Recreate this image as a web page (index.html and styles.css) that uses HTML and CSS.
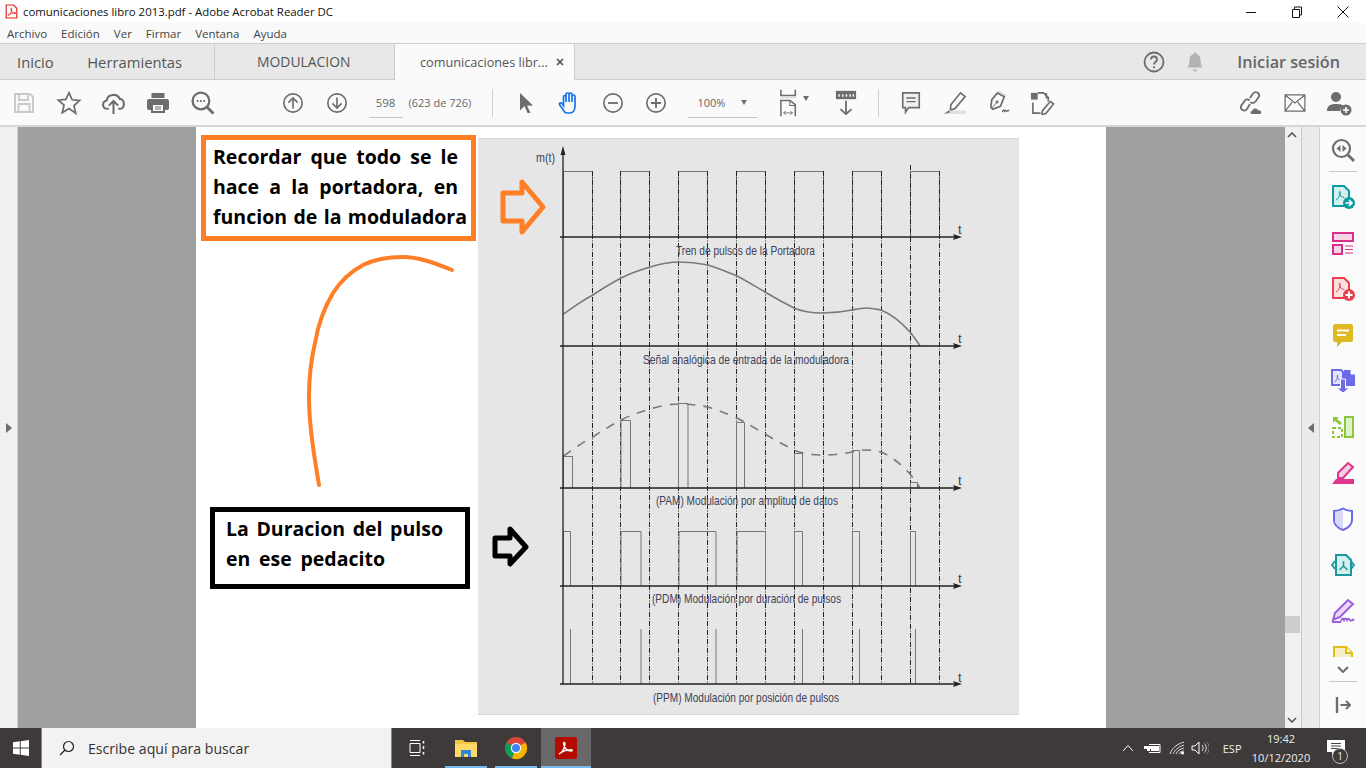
FILE: index.html
```html
<!DOCTYPE html>
<html lang="es">
<head>
<meta charset="utf-8">
<title>comunicaciones libro 2013.pdf - Adobe Acrobat Reader DC</title>
<link rel="stylesheet" href="styles.css">
</head>
<body>
<div class="app">
  <header class="titlebar">
    <svg class="title-icon" viewBox="0 0 16 18"><path d="M1.5 1h9l4 4v12h-13z" fill="#fff" stroke="#e0201b" stroke-width="1.4"/><path d="M3.5 14c3-1.500 4.500-4.500 4.800-8 .1-1.600-1.300-1.600-1 0 .6 3.300 2.800 5.500 5.700 5.500 1.300 0 1-1.200-.4-1.100-3.300.2-6.300 1.400-9.100 3.600z" fill="none" stroke="#e0201b" stroke-width="1"/></svg>
    <span class="title-text">comunicaciones libro 2013.pdf - Adobe Acrobat Reader DC</span>
    <div class="win-controls">
      <span class="win-btn"><svg viewBox="0 0 12 12" width="12" height="12"><path d="M1 6.500h10" stroke="#111" stroke-width="1"/></svg></span>
      <span class="win-btn"><svg viewBox="0 0 12 12" width="12" height="12"><path d="M1.500 3.500h7v8h-7zM3.500 3.500v-2.500h7v8h-2" fill="none" stroke="#111" stroke-width="1"/></svg></span>
      <span class="win-btn"><svg viewBox="0 0 12 12" width="12" height="12"><path d="M.5.500l11 11M11.500.500l-11 11" stroke="#111" stroke-width="1"/></svg></span>
    </div>
  </header>

  <nav class="menubar">
    <span class="menu-item">Archivo</span><span class="menu-item">Edición</span><span class="menu-item">Ver</span><span class="menu-item">Firmar</span><span class="menu-item">Ventana</span><span class="menu-item">Ayuda</span>
  </nav>

  <div class="tabbar">
    <div class="tab-home"><span class="tab-link">Inicio</span><span class="tab-link">Herramientas</span></div>
    <div class="tab-doc">MODULACION</div>
    <div class="tab-active"><span>comunicaciones libr...</span><svg viewBox="0 0 8 8" width="8" height="8"><path d="M1 1l6 6M7 1l-6 6" stroke="#555" stroke-width="1.700"/></svg></div>
    <div class="tab-right">
      <svg viewBox="0 0 24 24" width="24" height="24"><circle cx="12" cy="12" r="9.500" fill="none" stroke="#6d6d6d" stroke-width="1.800"/><path d="M9 9.500c0-4 6-4 6 0 0 2.500-3 2.500-3 5" fill="none" stroke="#6d6d6d" stroke-width="1.800"/><circle cx="12" cy="17.300" r="1.100" fill="#6d6d6d"/></svg>
      <svg class="bell" viewBox="0 0 24 24" width="24" height="24"><path d="M12 2.500c1 0 1.500.7 1.500 1.500 3 1 4 3.500 4 6.500 0 3.500 1 5.500 2 7H4.500c1-1.500 2-3.500 2-7 0-3 1-5.500 4-6.500 0-.8.500-1.500 1.500-1.500z" fill="#b2b2b2"/><path d="M10 19.500h4c0 2.500-4 2.500-4 0z" fill="#b2b2b2"/></svg>
      <span class="signin">Iniciar sesión</span>
    </div>
  </div>

  <div class="toolbar">
    <div class="tb-group tb-file">
      <span class="tb-cell"><svg viewBox="0 0 24 24" width="24" height="24"><path d="M3 3h15l3 3v15H3z" fill="none" stroke="#c9c9c9" stroke-width="2"/><path d="M7 3h9v6H7zM6.500 13h11v8h-11z" fill="none" stroke="#c9c9c9" stroke-width="1.800"/></svg></span>
      <span class="tb-cell"><svg viewBox="0 0 24 24" width="26" height="26"><path d="M12 2.500l2.900 6.500 7 .7-5.300 4.700 1.600 7L12 17.200 5.800 21l1.600-7-5.300-4.700 7-.7z" fill="none" stroke="#6d6d6d" stroke-width="1.600"/></svg></span>
      <span class="tb-cell"><svg viewBox="0 0 24 24" width="25" height="25"><path d="M7.500 18H6c-5 0-5.500-7-.5-8 .5-6 10-7.500 12.500-1.500 5 0 5.500 9.500.5 9.500h-2" fill="none" stroke="#6d6d6d" stroke-width="2"/><path d="M12 23V11M7.500 15l4.500-4.500 4.500 4.500" fill="none" stroke="#6d6d6d" stroke-width="2"/></svg></span>
      <span class="tb-cell"><svg viewBox="0 0 24 24" width="24" height="24"><path d="M5.500 2h13v5h-13z" fill="#6d6d6d"/><path d="M3 8h18c1 0 2 1 2 2v7c0 1-1 2-2 2h-2v3H5v-3H3c-1 0-2-1-2-2v-7c0-1 1-2 2-2z" fill="#6d6d6d"/><path d="M7 14h10v6H7z" fill="#fafafa"/><path d="M9 16h6M9 18h6" stroke="#6d6d6d"/></svg></span>
      <span class="tb-cell"><svg viewBox="0 0 24 24" width="25" height="25"><circle cx="10.500" cy="10.500" r="8" fill="none" stroke="#6d6d6d" stroke-width="2.200"/><path d="M16.500 16.500l6 6" stroke="#6d6d6d" stroke-width="2.800"/><path d="M6.500 10.500h1.600M9.700 10.500h1.600M12.900 10.500h1.600" stroke="#6d6d6d" stroke-width="1.800"/></svg></span>
    </div>
    <div class="tb-group tb-nav">
      <span class="tb-cell"><svg viewBox="0 0 24 24" width="22" height="22"><circle cx="12" cy="12" r="10" fill="none" stroke="#6d6d6d" stroke-width="1.800"/><path d="M12 18V6.500M7 11.500l5-5 5 5" fill="none" stroke="#6d6d6d" stroke-width="1.800"/></svg></span>
      <span class="tb-cell"><svg viewBox="0 0 24 24" width="22" height="22"><circle cx="12" cy="12" r="10" fill="none" stroke="#6d6d6d" stroke-width="1.800"/><path d="M12 6v11.500M7 12.500l5 5 5-5" fill="none" stroke="#6d6d6d" stroke-width="1.800"/></svg></span>
    </div>
    <span class="field field-page">598</span>
    <span class="page-count">(623 de 726)</span>
    <span class="tb-sep sep-a"></span>
    <div class="tb-group tb-mode">
      <span class="tb-cell"><svg viewBox="0 0 24 24" width="24" height="24"><path d="M6 2l13 12.500-6 .3 3.500 7-3 .2-3-7-4.500 4.500z" fill="#6d6d6d"/></svg></span>
      <span class="tb-cell"><svg viewBox="0 0 24 24" width="24" height="24"><path d="M6 20c-2-3-5-6-4.500-7.500s2.500-.5 4 2V6c0-2 2.500-2 2.500 0v5V3.500c0-2 3-2 3 0V11V3.500c0-2 3-2 3 0V11V5.500c0-2 3-2 3 0V15c0 4-2 7-5 7h-3c-1.500 0-2.500-.5-3-2z" fill="none" stroke="#1473e6" stroke-width="1.700"/></svg></span>
    </div>
    <div class="tb-group tb-zoom">
      <span class="tb-cell"><svg viewBox="0 0 24 24" width="22" height="22"><circle cx="12" cy="12" r="10" fill="none" stroke="#6d6d6d" stroke-width="1.800"/><path d="M6.500 12h11" stroke="#6d6d6d" stroke-width="2"/></svg></span>
      <span class="tb-cell"><svg viewBox="0 0 24 24" width="22" height="22"><circle cx="12" cy="12" r="10" fill="none" stroke="#6d6d6d" stroke-width="1.800"/><path d="M6.500 12h11M12 6.500v11" stroke="#6d6d6d" stroke-width="2"/></svg></span>
    </div>
    <span class="field field-zoom"><span>100%</span><i class="caret"></i></span>
    <span class="tb-fit"><svg viewBox="0 0 20 34" width="18" height="28" preserveAspectRatio="none"><path d="M1 1v7h16V1" fill="none" stroke="#6d6d6d" stroke-width="1.800"/><path d="M1 10h17" stroke="#dcdcdc" stroke-width="2.500"/><path d="M1 33V14h10l6 5v14" fill="none" stroke="#6d6d6d" stroke-width="1.700"/><path d="M11 14v6h6" fill="none" stroke="#6d6d6d" stroke-width="1.200"/><path d="M4 29h10M4 29l2.500-2M4 29l2.500 2M14 29l-2.500-2M14 29l-2.500 2" stroke="#6d6d6d" fill="none"/></svg><i class="caret"></i></span>
    <span class="tb-cell tb-scroll"><svg viewBox="0 0 24 30" width="22" height="25" preserveAspectRatio="none"><path d="M1 1h22v10H1z" fill="#6d6d6d"/><path d="M4.500 5v3M8.500 5v3M12.500 5v3M16.500 5v3M20 5v3" stroke="#fff" stroke-width="1.500"/><path d="M12 13v16M6 23l6 6 6-6" fill="none" stroke="#6d6d6d" stroke-width="2"/></svg></span>
    <span class="tb-sep sep-b"></span>
    <div class="tb-group tb-annot">
      <span class="tb-cell"><svg viewBox="0 0 24 26" width="22" height="24"><path d="M3 2h18v16H9.500L6 23v-5H3z" fill="#f0f0f0" stroke="#6d6d6d" stroke-width="1.800"/><path d="M7 7.500h10M7 11.500h10" stroke="#6d6d6d" stroke-width="1.500"/></svg></span>
      <span class="tb-cell"><svg viewBox="0 0 26 26" width="24" height="24"><path d="M19 2l5 4-11 13-5 2 .5-6z" fill="none" stroke="#6d6d6d" stroke-width="1.800"/><path d="M1 25l5-4h19v4z" fill="#e0e0e0"/><path d="M1 25l5-4 2 2z" fill="#6d6d6d"/></svg></span>
      <span class="tb-cell"><svg viewBox="0 0 26 26" width="25" height="25"><path d="M12 3l7 4-4 10-8 3-2-2 1-8z" fill="none" stroke="#6d6d6d" stroke-width="1.800"/><path d="M13 1l8 5" stroke="#dcdcdc" stroke-width="2"/><path d="M6 19l5-6" stroke="#6d6d6d"/><circle cx="11.500" cy="12.500" r="1.500" fill="#6d6d6d"/><path d="M17 23c1-3 1.500-3 2-1s1-2 1.500-1 .5 1.500 1.500 1 1-2 2 0" fill="none" stroke="#6d6d6d" stroke-width="1.300"/></svg></span>
      <span class="tb-cell"><svg viewBox="0 0 26 26" width="25" height="25"><path d="M1 3h7v7H1z" fill="#6d6d6d"/><path d="M8 3h6l5 5v4M17 3v5h3M3 13v11h8" fill="none" stroke="#6d6d6d" stroke-width="1.700"/><path d="M21 12l3.500 2.500-8 10-4 1 .5-4z" fill="none" stroke="#6d6d6d" stroke-width="1.700"/></svg></span>
    </div>
    <div class="tb-group tb-share">
      <span class="tb-cell"><svg viewBox="0 0 26 26" width="26" height="26"><path d="M12 8l3-4.500c2.500-3 7-.5 6 3l-3.500 5c-1.500 2-4 2-5 .5M12 14l-3 5c-2.500 3-7 1-6-3l3.500-5c1.500-2 4-2 5-.5" fill="none" stroke="#6d6d6d" stroke-width="1.800"/><path d="M14 24c-2 0-2-3 0-3 .5-3 5-3.500 6-.5 3-1 5 3.500 1.500 3.500z" fill="#6d6d6d"/></svg></span>
      <span class="tb-cell"><svg viewBox="0 0 24 20" width="22" height="18"><path d="M1 1h22v18H1zM1 1l11 9 11-9M1 19l8-10M23 19l-8-10" fill="none" stroke="#6d6d6d" stroke-width="1.400"/></svg></span>
      <span class="tb-cell"><svg viewBox="0 0 26 26" width="26" height="26"><circle cx="10" cy="7" r="5" fill="#6d6d6d"/><path d="M1 21c0-6 4-7 9-7s7 1 8 2c-3 1-4 3-4 5z" fill="#6d6d6d"/><circle cx="20" cy="20" r="5.500" fill="#6d6d6d"/><path d="M17 20h6M20 17v6" stroke="#fff" stroke-width="1.600"/></svg></span>
    </div>
  </div>

  <main class="workspace">
    <aside class="left-rail"><i class="tri-right"></i></aside>
    <section class="viewer">
      <article class="doc-page">
        <div class="note note-orange">
          <span class="note-line nl-245">Recordar que todo se le</span>
          <span class="note-line nl-245">hace a la portadora, en</span>
          <span class="note-line nl-254">funcion de la moduladora</span>
        </div>
        <div class="note note-black">
          <span class="note-line nl-217">La Duracion del pulso</span>
          <span class="note-line nl-159">en ese pedacito</span>
        </div>
        <svg class="canvas" viewBox="196 127 910 600" width="910" height="600" xmlns="http://www.w3.org/2000/svg">
          <rect x="478" y="138" width="541" height="577" fill="#e6e6e6"/>
          <path d="M478 138.500h541M478 714.500h541" stroke="#d6d6d6"/>
          <path class="thin" d="M563.500 237V171.500H592.500V237M620.500 237V171.500H649.500V237M678.500 237V171.500H707.500V237M736.500 237V171.500H765.500V237M794.500 237V171.500H823.500V237M852.500 237V171.500H881.500V237M910.500 237V171.500H939.500V237"/>
          <g class="grid-dash">
            <path d="M592.500 171V684M620.500 171V684M649.500 171V684M678.500 171V684M707.500 171V684M736.500 171V684M765.500 171V684M794.500 171V684M823.500 171V684M852.500 171V684M881.500 171V684M910.500 165V684M939.500 171V684"/>
          </g>
          <path id="wave" class="wave" d="M563.500 314C575 306 583 300 593 295C603 288 612 283 621 278C631 273 640 270 650 267C660 264 670 262 679 262C689 262 698 263 708 265C718 268 727 272 737 276C747 281 756 287 765 292C775 298 784 303 794 308C803 312 813 313 823 313C833 313 842 312 852 310C857 309 861 308 866.500 308C872 308 876 309 881 310C891 314 901 322 910 332C914 337 917 341 920 346"/>
          <path class="wave dashed" d="M563.500 456C575 448 583 442 593 437C603 430 612 425 621 420C631 415 640 412 650 409C660 406 670 404 679 404C689 404 698 405 708 407C718 410 727 414 737 418C747 423 756 429 765 434C775 440 784 445 794 450C803 454 813 455 823 455C833 455 842 454 852 452C857 451 861 450 866.500 450C872 450 876 451 881 452C891 456 901 464 910 474C914 479 917 483 920 488"/>
          <path class="thin" d="M563.500 488V456.500H572.500V488M621 488V420.500H630.500V488M678.500 488V403.500H688V488M736.500 488V422.500H744.500V488M794.500 488V453.500H802.500V488M852.500 488V450.500H859.500V488M910.500 488V482.500H917.500V488"/>
          <path class="thin" d="M563.500 586V531.500H570.500V586M621 586V531.500H641V586M679 586V531.500H716V586M737 586V531.500H765.500V586M794.500 586V531.500H802.500V586M852.500 586V531.500H859.500V586M910.500 586V531.500H915.500V586"/>
          <path class="thin" d="M570.500 629V684M641 629V684M716 629V684M802.500 629V684M859.500 629V684M915.500 629V684"/>
          <path class="axis" d="M563 684V150M560 237H958M560 346H958M560 488H958M560 586H958M560 684H958"/>
          <path class="arrowhead" d="M563 146l-2.500 9h5zM962 237l-9-3 1.500 3-1.500 3zM962 346l-9-3 1.500 3-1.500 3zM962 488l-9-3 1.500 3-1.500 3zM962 586l-9-3 1.500 3-1.500 3zM962 684l-9-3 1.500 3-1.500 3z"/>
          <g class="chart-text">
            <text x="536" y="162" textLength="19" lengthAdjust="spacingAndGlyphs">m(t)</text>
            <text x="958" y="234">t</text><text x="958" y="343">t</text><text x="958" y="485">t</text><text x="958" y="583">t</text><text x="958" y="682">t</text>
            <text x="676" y="255" textLength="139" lengthAdjust="spacingAndGlyphs">Tren de pulsos de la Portadora</text>
            <text x="643" y="364" textLength="206" lengthAdjust="spacingAndGlyphs">Señal analógica  de entrada de la moduladora</text>
            <text x="656" y="505" textLength="182" lengthAdjust="spacingAndGlyphs">(PAM) Modulación por amplitud de datos</text>
            <text x="652" y="603" textLength="189" lengthAdjust="spacingAndGlyphs">(PDM) Modulación por duración de pulsos</text>
            <text x="653" y="702" textLength="186" lengthAdjust="spacingAndGlyphs">(PPM) Modulación por posición de pulsos</text>
          </g>
          <path class="mark mark-orange" d="M503 193H522V182L543 207L522 232V221H503Z"/>
          <path class="mark mark-black" d="M495 538H510V529L526 547L510 564V556H495Z"/>
          <path class="stroke-orange" d="M452 270C432 262 418 257 403 257C388 257 375 259 363 265C350 272 340 282 333 293C324 308 318 325 315 343C311 360 309 378 309 397C309 425 314 455 319 485"/>
        </svg>
      </article>
    </section>
    <div class="scrollbar">
      <svg viewBox="0 0 10 6" width="10" height="6"><path d="M1 5l4-4 4 4" fill="none" stroke="#555" stroke-width="1.600"/></svg>
      <span class="scroll-thumb"></span>
      <svg viewBox="0 0 10 6" width="10" height="6"><path d="M1 1l4 4 4-4" fill="none" stroke="#555" stroke-width="1.600"/></svg>
    </div>
    <aside class="collapse-rail"><i class="tri-left"></i></aside>
    <aside class="tool-panel">
      <span class="tool-top"><svg viewBox="0 0 24 24" width="24" height="24"><circle cx="10.500" cy="10.500" r="8.500" fill="none" stroke="#6d6d6d" stroke-width="2.200"/><path d="M17 17l6 6" stroke="#6d6d6d" stroke-width="2.800"/><path d="M9.500 7v7l-4-3.500zM11.500 7v7l4-3.500z" fill="#6d6d6d"/></svg></span>
      <span class="tool-rule"></span>
      <div class="tool-list">
        <span class="tool"><svg viewBox="0 0 24 24" width="24" height="24"><path d="M2 1h11l5 5v15H2z" fill="#d5eeee" stroke="#0f9a9e" stroke-width="2"/><path d="M5 15c2.500-1.500 4-4.500 4.300-7.500 0-1.500-1.200-1.500-1 0 .5 3 2.500 5 5 5" fill="none" stroke="#0f9a9e"/><circle cx="18" cy="18" r="6" fill="#0f9a9e"/><path d="M14.500 18h6M18 15l3 3-3 3" fill="none" stroke="#fff" stroke-width="1.600"/></svg></span>
        <span class="tool"><svg viewBox="0 0 24 24" width="24" height="24"><path d="M2 2h20v8H2z" fill="#f5d5e6" stroke="#d9308c" stroke-width="2"/><path d="M2 14h9v9H2z" fill="#f5d5e6" stroke="#d9308c" stroke-width="2"/><path d="M14 15h8M14 18.500h8M14 22h8" stroke="#d9308c" stroke-width="1.200"/></svg></span>
        <span class="tool"><svg viewBox="0 0 24 24" width="24" height="24"><path d="M2 1h11l5 5v15H2z" fill="#fbe0e2" stroke="#e8404f" stroke-width="2"/><path d="M5 15c2.500-1.500 4-4.500 4.300-7.500 0-1.500-1.200-1.500-1 0 .5 3 2.500 5 5 5" fill="none" stroke="#e8404f"/><circle cx="18" cy="18" r="6" fill="#e8404f"/><path d="M14.500 18h7M18 14.500v7" stroke="#fff" stroke-width="2"/></svg></span>
        <span class="tool"><svg viewBox="0 0 24 24" width="24" height="24"><path d="M4 1h16c1 0 2 1 2 2v14c0 1-1 2-2 2H11l-5 5v-5H4c-1 0-2-1-2-2V3c0-1 1-2 2-2z" fill="#e0b820"/><path d="M6 7.500h12M6 12h9" stroke="#fff" stroke-width="2"/></svg></span>
        <span class="tool"><svg viewBox="0 0 24 24" width="24" height="24"><path d="M1 1h9l2 2v13H1z" fill="#e4e4fb" stroke="#6b6be8" stroke-width="2"/><path d="M13 1h7l4 4v12H13z" fill="#6b6be8"/><path d="M20 0v5h4" fill="#fff" stroke="#fff"/><path d="M3.500 13c2-1 3-3.500 3.300-6 0-1-1-1-.8 0 .4 2.500 2 4 4 4" fill="none" stroke="#6b6be8"/><path d="M9.500 10v9h-4l6.500 5 6.500-5h-4v-9z" fill="#6b6be8" stroke="#fbfbfb"/></svg></span>
        <span class="tool"><svg viewBox="0 0 24 24" width="24" height="24"><path d="M14 2h8v20h-8z" fill="#dff1c9" stroke="#8cc63f" stroke-width="2"/><path d="M2 13h9v9H2z" fill="none" stroke="#8cc63f" stroke-width="2" stroke-dasharray="3 2"/><path d="M2 2h6l-2 2 5 4-2 2-5-4-2 2z" fill="#8cc63f"/></svg></span>
        <span class="tool"><svg viewBox="0 0 24 24" width="24" height="24"><path d="M17 2l5 4-10 11H7v-5z" fill="#f7d0e4" stroke="#e0358d" stroke-width="2"/><path d="M1 23l4-5h18v5z" fill="#e0358d"/></svg></span>
        <span class="tool"><svg viewBox="0 0 24 24" width="24" height="24"><path d="M12 1.500c3 2 6 2.500 9 2.500v9c0 5-4 8-9 10-5-2-9-5-9-10V4c3 0 6-.5 9-2.500z" fill="#fff" stroke="#6a6ae8" stroke-width="2"/><path d="M12 3v19c-4-2-8-4.500-8-9V5c3 0 5.500-.5 8-2z" fill="#d8d8f8"/></svg></span>
        <span class="tool"><svg viewBox="0 0 24 24" width="24" height="24"><path d="M5 2h10l5 5v15H5z" fill="#d5eeee" stroke="#1a9a9e" stroke-width="2"/><path d="M12.500 8v5M8.500 17l4-4 4 4" fill="none" stroke="#1a9a9e" stroke-width="1.500"/><path d="M4 8L1 12l3 4M20 8l3 4-3 4" fill="none" stroke="#1a9a9e" stroke-width="2" /></svg></span>
        <span class="tool"><svg viewBox="0 0 24 24" width="24" height="24"><path d="M17 1l5 4-13 13-7 3 2-7z" fill="#e8d8f8" stroke="#9b5fdc" stroke-width="2"/><path d="M1 23h9M10 22c1-3 2-3 3-1 1-2 2-2 3 0 1-2 2-1 3 0s3 0 4-1" fill="none" stroke="#9b5fdc" stroke-width="2"/></svg></span>
        <span class="tool"><svg viewBox="0 0 24 24" width="24" height="24"><path d="M3 2h12l6 6v15H3z" fill="#f5efc4" stroke="#e2bd10" stroke-width="2"/><path d="M15 2v6h6" fill="#fff" stroke="#e2bd10" stroke-width="2"/></svg></span>
      </div>
      <span class="tool-more"><svg viewBox="0 0 12 7" width="12" height="7"><path d="M1 1l5 5 5-5" fill="none" stroke="#6d6d6d" stroke-width="2"/></svg></span>
      <span class="tool-rule"></span>
      <span class="tool-exit"><svg viewBox="0 0 16 16" width="16" height="16"><path d="M2 0v16" stroke="#6d6d6d" stroke-width="2.400"/><path d="M5.500 8H15M11 4l4 4-4 4" fill="none" stroke="#6d6d6d" stroke-width="2"/></svg></span>
    </aside>
  </main>

  <footer class="taskbar">
    <span class="start"><svg viewBox="0 0 16 16" width="16" height="16"><path d="M0 2.300l6.800-1V7.600H0zM7.700 1.200L16 0v7.600H7.700zM0 8.400h6.800v6.300l-6.800-1zM7.700 8.400H16V16l-8.300-1.200z" fill="#fff"/></svg></span>
    <div class="search">
      <svg viewBox="0 0 16 16" width="16" height="16"><circle cx="9.500" cy="6.500" r="5" fill="none" stroke="#222" stroke-width="1.200"/><path d="M6 10l-5 5" stroke="#222" stroke-width="1.300"/></svg>
      <span>Escribe aquí para buscar</span>
    </div>
    <span class="task task-view"><svg viewBox="0 0 16 16" width="16" height="16"><path d="M1 .500h10M1 15.500h10M1 3.500h10v9H1z" fill="none" stroke="#fff"/><path d="M14.500 1v2.500M14.500 6v3M14.500 12v2.500" stroke="#fff" stroke-width="1.500"/></svg></span>
    <span class="task task-app"><svg viewBox="0 0 24 22" width="24" height="22"><path d="M1 3h8l2 2h12v15H1z" fill="#f4c542"/><path d="M1 7h22v13H1z" fill="#ffd966"/><path d="M7 20v-7h10v7h-3v-3h-4v3z" fill="#2b88d8"/></svg></span>
    <span class="task task-app"><svg viewBox="0 0 24 24" width="24" height="24"><circle cx="12" cy="12" r="11" fill="#db4437"/><path d="M12 12L2.500 6.500A11 11 0 0 0 8 22.300z" fill="#0f9d58"/><path d="M12 12l9.500-5.500A11 11 0 0 1 8 22.300z" fill="#f4b400"/><circle cx="12" cy="12" r="5.200" fill="#fff"/><circle cx="12" cy="12" r="4" fill="#4285f4"/></svg></span>
    <span class="task task-app task-current"><svg viewBox="0 0 24 24" width="24" height="24"><rect x="1" y="1" width="22" height="22" rx="2" fill="#b30b00"/><path d="M5 18c3.500-1.800 5.500-5.500 6-10 .2-2-1.700-2-1.300 0 .8 4.300 3.700 7 7.500 7 1.700 0 1.300-1.500-.5-1.400-4.300.3-8.200 1.800-11.700 4.400z" fill="none" stroke="#fff" stroke-width="1.400"/></svg></span>
    <div class="tray">
      <svg viewBox="0 0 12 8" width="12" height="8"><path d="M1 7l5-5.500L11 7" fill="none" stroke="#fff"/></svg>
      <svg viewBox="0 0 18 12" width="18" height="12"><path d="M4 2v2M7 2v2M1 4h8v3H7v2H4V7H1z" fill="#fff"/><path d="M6 2.500h11v8H6" fill="none" stroke="#fff"/><path d="M8 4h8v5H8z" fill="#fff"/></svg>
      <svg viewBox="0 0 16 14" width="16" height="14"><path d="M1 13C3 7 8 3 15 1M4 13c2-4 5-7 11-9M7 13c1-3 4-5 8-6M10 13c1-2 3-3 5-3" fill="none" stroke="#ddd"/><circle cx="13.500" cy="12" r="1.600" fill="#fff"/></svg>
      <svg viewBox="0 0 18 14" width="18" height="14"><path d="M1 5h3l4-4v12l-4-4H1z" fill="none" stroke="#fff"/><path d="M11 4c1.500 2 1.500 4 0 6M13.500 2.500c2.300 3 2.300 6 0 9" fill="none" stroke="#ddd"/><path d="M16 1c3 4 3 8 0 12" fill="none" stroke="#888"/></svg>
      <span class="lang">ESP</span>
      <span class="clock"><span>19:42</span><span>10/12/2020</span></span>
      <span class="notify">
        <svg viewBox="0 0 18 16" width="18" height="16"><path d="M0 0h18v12H8l-3 4v-4H0z" fill="#fff"/><path d="M4 3.500h10M4 6h10M4 8.500h10" stroke="#444"/></svg>
        <span class="notify-badge">1</span>
      </span>
    </div>
  </footer>
</div>
</body>
</html>
```
FILE: styles.css
```css
* { box-sizing: border-box; }
html, body { margin: 0; padding: 0; overflow: hidden; }
body { font-family: "Open Sans", "Noto Sans", sans-serif; color: #333; background: #fff; }
svg { display: block; flex: none; }
.app { width: 1366px; height: 768px; display: flex; flex-direction: column; }

.titlebar { height: 23px; background: #fff; display: flex; align-items: center; padding-left: 5px; }
.title-icon { width: 13px; height: 15px; }
.title-text { margin-left: 5px; font-size: 11.400px; color: #111; white-space: nowrap; }
.win-controls { margin-left: auto; display: flex; }
.win-btn { width: 46px; height: 23px; display: flex; align-items: center; justify-content: center; }

.menubar { height: 21px; background: #f9f9f9; border-bottom: 1px solid #cdcdcd; display: flex; align-items: center; padding-left: 7px; font-size: 11.500px; color: #444; }
.menu-item { margin-right: 14px; }

.tabbar { height: 36px; background: #e8e8e8; border-bottom: 1px solid #cdcdcd; display: flex; font-size: 14.800px; color: #555; }
.tab-home { width: 215px; padding-left: 17px; display: flex; align-items: center; gap: 33.500px; border-right: 1px solid #cdcdcd; }
.tab-doc { width: 180px; padding-left: 42px; display: flex; align-items: center; font-size: 13.900px; border-right: 1px solid #cdcdcd; }
.tab-active { width: 180px; height: 36px; background: #fafafa; border-right: 1px solid #cdcdcd; padding-left: 25px; display: flex; align-items: center; gap: 8px; font-size: 12.700px; white-space: nowrap; }
.tab-right { margin-left: auto; display: flex; align-items: center; padding-right: 26px; }
.bell { margin-left: 17px; }
.signin { margin-left: 30px; font-size: 16.200px; font-weight: 600; color: #666; }

.toolbar { height: 47px; background: #fafafa; border-bottom: 2px solid #d6d6d6; display: flex; align-items: center; padding-left: 2px; }
.tb-group { display: flex; }
.tb-cell { width: 44px; height: 44px; display: flex; align-items: center; justify-content: center; flex: none; }
.tb-file .tb-cell { width: 44.500px; }
.tb-nav { margin-left: 46px; }
.field { height: 30px; border-bottom: 1px solid #c4c4c4; font-size: 11.500px; color: #666; display: flex; align-items: center; }
.field-page { width: 34px; margin-left: 10px; justify-content: center; }
.page-count { margin-left: 6px; width: 66px; font-size: 11px; color: #666; white-space: nowrap; }
.tb-sep { width: 1px; height: 28px; background: #d0d0d0; flex: none; }
.sep-a { margin-left: 17px; }
.tb-mode { margin-left: 11px; }
.tb-zoom { margin-left: -.5px; }
.tb-zoom .tb-cell { width: 43px; }
.field-zoom { width: 69px; margin-left: 10.500px; padding-left: 10px; gap: 16px; font-size: 11px; }
.caret { width: 0; height: 0; border-left: 3.500px solid transparent; border-right: 3.500px solid transparent; border-top: 5px solid #6d6d6d; flex: none; }
.tb-fit { margin-left: 23px; display: flex; align-items: center; gap: 5px; width: 30px; flex: none; }
.tb-fit .caret { margin-bottom: 8px; }
.tb-scroll { margin-left: 14px; }
.sep-b { margin-left: 10px; }
.tb-annot { margin-left: 10px; }
.tb-share { margin-left: 164px; }

.workspace { height: 601px; flex: none; display: flex; }
.left-rail { width: 18px; background: #f0f0f0; display: flex; align-items: center; justify-content: center; border-right: 1px solid #cfcfcf; }
.tri-right { border-top: 5px solid transparent; border-bottom: 5px solid transparent; border-left: 6px solid #6d6d6d; }
.tri-left { border-top: 5px solid transparent; border-bottom: 5px solid transparent; border-right: 6px solid #6d6d6d; }
.viewer { width: 1267px; background: #a0a0a0; padding-left: 178px; overflow: hidden; }
.doc-page { position: relative; width: 910px; height: 601px; background: #fff; }
.canvas { position: absolute; left: 0; top: 0; }

.note { position: absolute; z-index: 1; background: #fff; border-style: solid; border-width: 5px; font-family: "Open Sans", "Noto Sans", sans-serif; font-weight: 700; font-size: 19.500px; line-height: 30px; color: #000; }
.note-orange { left: 5px; top: 8px; width: 275px; height: 106px; border-color: #ff7f27; padding: 2px 0 0 7px; }
.note-black { left: 14px; top: 380px; width: 260px; height: 82px; border-color: #000; padding: 2px 0 0 11px; }
.note-line { display: block; text-align: justify; text-align-last: justify; white-space: normal; }
.nl-245 { width: 245px; }
.nl-254 { width: 254px; }
.nl-217 { width: 217px; }
.nl-159 { width: 159px; }

.grid-dash path { fill: none; stroke: #222; stroke-width: 1; stroke-dasharray: 5 1.500 1 1.500; }
.thin { fill: none; stroke: #777; stroke-width: 1; }
.wave { fill: none; stroke: #7a7a7a; stroke-width: 1.600; }
.wave.dashed { stroke-dasharray: 9 8; }
.axis { fill: none; stroke: #222; stroke-width: 1.300; }
.arrowhead { fill: #222; }
.chart-text text { font-family: "Liberation Sans", sans-serif; font-size: 13px; fill: #3d4258; }
.mark { fill: #fff; stroke-width: 5; stroke-linejoin: round; }
.mark-orange { stroke: #ff7f27; fill: #e6e6e6; }
.mark-black { stroke: #000; fill: #e6e6e6; }
.stroke-orange { fill: none; stroke: #ff7f27; stroke-width: 4; stroke-linecap: round; }

.scrollbar { width: 17px; background: #f0f0f0; border-right: 1px solid #c8c8c8; position: relative; display: flex; flex-direction: column; align-items: center; justify-content: space-between; padding: 5px 2px 5px 0; }
.scroll-thumb { position: absolute; left: 0; top: 489px; width: 15px; height: 17px; background: #cdcdcd; }
.collapse-rail { width: 18px; background: #ebebeb; border-right: 1px solid #cfcfcf; display: flex; align-items: center; justify-content: center; }
.tool-panel { width: 46px; background: #fbfbfb; display: flex; flex-direction: column; align-items: center; }
.tool-top { height: 44px; display: flex; align-items: center; justify-content: center; padding-top: 1px; }
.tool-rule { width: 28px; height: 1px; background: #c8c8c8; flex: none; }
.tool-list { height: 483px; margin-top: 2px; overflow: hidden; flex: none; }
.tool { height: 46px; display: flex; align-items: center; justify-content: center; }
.tool-more { height: 24px; display: flex; align-items: center; justify-content: center; flex: none; }
.tool-exit { height: 46px; display: flex; align-items: center; justify-content: center; flex: none; }

.taskbar { height: 40px; background: #3d3a39; display: flex; align-items: stretch; color: #fff; }
.start { width: 41px; display: flex; align-items: center; justify-content: center; }
.search { width: 351px; background: #f2f2f2; border: 1px solid #888; border-bottom: 0; border-top: 0; display: flex; align-items: center; padding-left: 17px; gap: 13px; font-size: 14.100px; color: #333; }
.task { display: flex; align-items: center; justify-content: center; flex: none; position: relative; }
.task-view { width: 49px; }
.task-app { width: 50px; }
.task-app::after { content: ""; position: absolute; left: 4px; right: 4px; bottom: 0; height: 2px; background: #76b9ed; }
.task-current { background: #686868; }
.task-current::after { left: 0; right: 0; }
.tray { margin-left: auto; display: flex; align-items: center; }
.tray > svg:nth-child(1) { margin-right: 9px; }
.tray > svg:nth-child(2) { margin-right: 8px; }
.tray > svg:nth-child(3) { margin-right: 6px; }
.lang { margin-left: 14px; font-size: 11px; color: #eee; }
.clock { width: 75px; margin-left: 2px; display: flex; flex-direction: column; align-items: center; font-size: 11px; line-height: 19px; color: #eee; }
.notify { width: 47.500px; position: relative; display: flex; justify-content: center; align-items: center; padding-right: 12px; }
.notify-badge { position: absolute; left: 13.500px; top: 8px; width: 16px; height: 16px; border-radius: 50%; border: 1px solid #bbb; background: #3d3a39; font-size: 10px; line-height: 14px; text-align: center; color: #eee; }
```
